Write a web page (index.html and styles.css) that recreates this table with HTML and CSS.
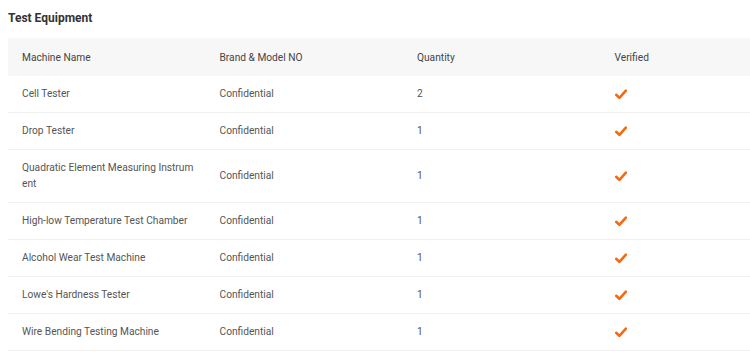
FILE: index.html
```html
<!DOCTYPE html>
<html lang="en">
<head>
    <meta charset="UTF-8">
    <title>Test Equipment</title>
    <link rel="stylesheet" href="styles.css">
</head>
<body>
    <div class="section">
        <h2 class="section-title">Test Equipment</h2>
        <table class="equip-table">
            <colgroup>
                <col class="col-wide">
                <col class="col-wide">
                <col class="col-wide">
                <col>
            </colgroup>
            <thead>
                <tr>
                    <th>Machine Name</th>
                    <th>Brand &amp; Model NO</th>
                    <th>Quantity</th>
                    <th>Verified</th>
                </tr>
            </thead>
            <tbody>
                <tr><td>Cell Tester</td><td>Confidential</td><td>2</td><td><span class="check"></span></td></tr>
                <tr><td>Drop Tester</td><td>Confidential</td><td>1</td><td><span class="check"></span></td></tr>
                <tr><td>Quadratic Element Measuring Instrument</td><td>Confidential</td><td>1</td><td><span class="check"></span></td></tr>
                <tr><td>High-low Temperature Test Chamber</td><td>Confidential</td><td>1</td><td><span class="check"></span></td></tr>
                <tr><td>Alcohol Wear Test Machine</td><td>Confidential</td><td>1</td><td><span class="check"></span></td></tr>
                <tr><td>Lowe's Hardness Tester</td><td>Confidential</td><td>1</td><td><span class="check"></span></td></tr>
                <tr><td>Wire Bending Testing Machine</td><td>Confidential</td><td>1</td><td><span class="check"></span></td></tr>
            </tbody>
        </table>
    </div>

    <script>
        // fill the verified column with the check icon
        document.querySelectorAll('.check').forEach(function(el) {
            el.innerHTML = '<svg width="12" height="11" viewBox="0 0 12 11"><path d="M1.2 5.8 L4.4 8.9 L10.9 1.6" fill="none" stroke="#f56a10" stroke-width="2.6" stroke-linecap="round" stroke-linejoin="round"/></svg>';
        });
    </script>
</body>
</html>
```

FILE: styles.css
```css
body {
    margin: 0;
    padding: 0 0 0 8px;
    font-family: Roboto, "Liberation Sans", sans-serif;
    color: #555;
    background: #fff;
}
.section-title {
    margin: 0;
    height: 38px;
    line-height: 36px;
    font-size: 12px;
    font-weight: bold;
    color: #333;
}
.equip-table {
    width: 742px;
    border-collapse: collapse;
    table-layout: fixed;
    font-size: 10.2px;
}
.col-wide {
    width: 197.5px;
}
.equip-table th {
    background-color: #f7f7f7;
    height: 38px;
    padding: 0 10px 0 14px;
    text-align: left;
    font-weight: normal;
    color: #444;
}
.equip-table td {
    padding: 10px 10px 10px 14px;
    line-height: 16px;
    border-bottom: 1px solid #f2f2f2;
    vertical-align: middle;
    word-break: break-all;
}
.check svg {
    display: block;
    margin-top: 1px;
}
```
